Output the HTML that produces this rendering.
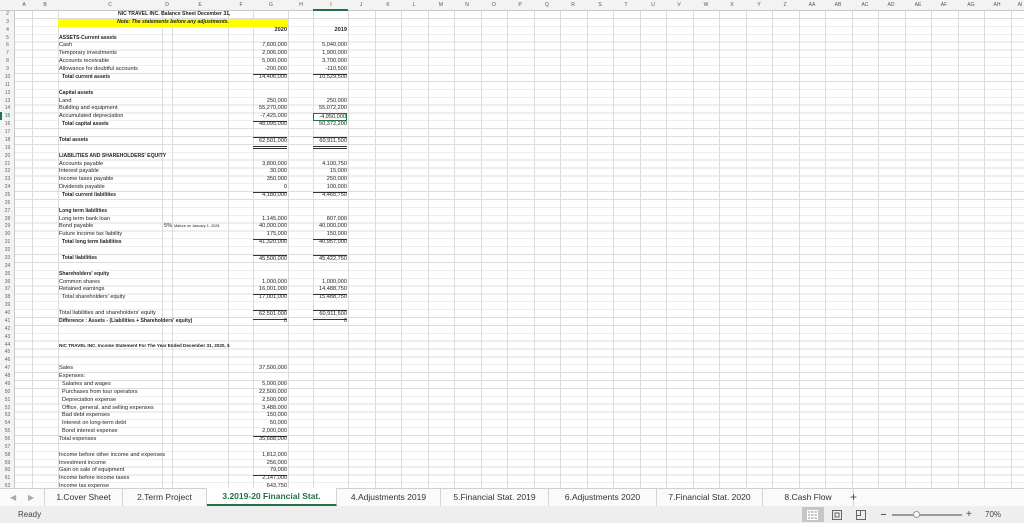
<!DOCTYPE html>
<html><head><meta charset="utf-8"><style>
*{margin:0;padding:0;box-sizing:border-box}
body{width:1024px;height:523px;overflow:hidden;background:#fff;font-family:"Liberation Sans",sans-serif;position:relative;color:#222}
.grid{position:absolute;left:0;top:11px;width:1024px;height:477px;background:repeating-linear-gradient(to bottom,transparent 0,transparent 7.07px,#dcdcdc 7.07px,#dcdcdc 7.87px)}
.v{position:absolute;top:0;height:488px;width:1px;background:#dcdcdc}
.hdr{position:absolute;left:0;top:0;width:1024px;height:11px;background:#f3f3f3;border-bottom:1px solid #c8c8c8}
.hl{position:absolute;top:2px;font-size:5px;color:#555;transform:translateX(-50%)}
.rn{position:absolute;left:0;width:15px;height:488px;background:#f3f3f3;border-right:1px solid #c8c8c8}
.r{position:absolute;left:0;width:1024px;height:7.87px;top:calc(11px + (var(--r) - 2)*7.87px);font-size:5.6px;line-height:7.87px;white-space:nowrap}
.n{position:absolute;left:2px;width:11px;text-align:center;color:#666;font-size:5px}
.c{position:absolute;left:59px}
.ci{position:absolute;left:62px}
.g{position:absolute;left:253px;width:34px;text-align:right}
.i{position:absolute;left:313px;width:34px;text-align:right}
b{font-weight:bold;font-size:5.1px}
b.g,b.i{font-size:5.6px}
.bt{border-top:1px solid #333}
.bb{border-bottom:1px solid #333}
.tabs{position:absolute;left:0;top:488px;width:1024px;height:18px;background:#fafafa;border-top:1px solid #d0d0d0;font-size:8.5px;color:#333}
.tab{position:absolute;top:0;height:17px;line-height:17px;text-align:center;border-right:1px solid #d5d5d5}
.status{position:absolute;left:0;top:506px;width:1024px;height:17px;background:#eeeeee;font-size:8px;color:#444}
</style></head><body>
<div class="grid"></div>
<div class="v" style="left:32px"></div><div class="v" style="left:58px"></div><div class="v" style="left:162px"></div><div class="v" style="left:172px"></div><div class="v" style="left:228px"></div><div class="v" style="left:253px"></div><div class="v" style="left:288px"></div><div class="v" style="left:313px"></div><div class="v" style="left:348px"></div><div class="v" style="left:375px"></div>
<div class="v" style="left:401px"></div><div class="v" style="left:428px"></div><div class="v" style="left:454px"></div><div class="v" style="left:481px"></div><div class="v" style="left:507px"></div><div class="v" style="left:534px"></div><div class="v" style="left:560px"></div><div class="v" style="left:587px"></div><div class="v" style="left:613px"></div><div class="v" style="left:640px"></div><div class="v" style="left:666px"></div><div class="v" style="left:693px"></div><div class="v" style="left:719px"></div><div class="v" style="left:746px"></div><div class="v" style="left:772px"></div><div class="v" style="left:799px"></div><div class="v" style="left:825px"></div><div class="v" style="left:852px"></div><div class="v" style="left:878px"></div><div class="v" style="left:905px"></div><div class="v" style="left:931px"></div><div class="v" style="left:958px"></div><div class="v" style="left:984px"></div><div class="v" style="left:1011px"></div>
<div class="hdr">
<span class="hl" style="left:24px">A</span><span class="hl" style="left:45px">B</span><span class="hl" style="left:110px">C</span><span class="hl" style="left:167px">D</span><span class="hl" style="left:200px">E</span><span class="hl" style="left:241px">F</span><span class="hl" style="left:271px">G</span><span class="hl" style="left:301px">H</span><span class="hl" style="left:331px">I</span><span class="hl" style="left:361px">J</span><span class="hl" style="left:388px">K</span><span class="hl" style="left:414px">L</span><span class="hl" style="left:441px">M</span><span class="hl" style="left:467px">N</span><span class="hl" style="left:494px">O</span><span class="hl" style="left:520px">P</span><span class="hl" style="left:547px">Q</span><span class="hl" style="left:573px">R</span><span class="hl" style="left:600px">S</span><span class="hl" style="left:626px">T</span><span class="hl" style="left:653px">U</span><span class="hl" style="left:679px">V</span><span class="hl" style="left:706px">W</span><span class="hl" style="left:732px">X</span><span class="hl" style="left:759px">Y</span><span class="hl" style="left:785px">Z</span><span class="hl" style="left:812px">AA</span><span class="hl" style="left:838px">AB</span><span class="hl" style="left:865px">AC</span><span class="hl" style="left:891px">AD</span><span class="hl" style="left:918px">AE</span><span class="hl" style="left:944px">AF</span><span class="hl" style="left:971px">AG</span><span class="hl" style="left:997px">AH</span><span class="hl" style="left:1020px">AI</span>
<div style="position:absolute;left:313px;top:9px;width:35px;height:2px;background:#217346"></div>
</div>
<div class="rn" style="top:11px"></div>
<div style="position:absolute;left:0;top:112px;width:2px;height:8px;background:#217346"></div>

<div class="r" style="--r:2"><span class="n">2</span><b style="position:absolute;left:118px">NIC TRAVEL INC. Balance Sheet December 31,</b></div>
<div class="r" style="--r:3"><span class="n">3</span><div style="position:absolute;left:58px;width:230px;height:7.87px;background:#ffff00;text-align:center"><b><i>Note: The statements before any adjustments.</i></b></div></div>
<div class="r" style="--r:4"><span class="n">4</span><b class="g">2020</b><b class="i">2019</b></div>
<div class="r" style="--r:5"><span class="n">5</span><b class="c">ASSETS-Current assets</b></div>
<div class="r" style="--r:6"><span class="n">6</span><span class="c">Cash</span><span class="g">7,600,000</span><span class="i">5,040,000</span></div>
<div class="r" style="--r:7"><span class="n">7</span><span class="c">Temporary investments</span><span class="g">2,006,000</span><span class="i">1,900,000</span></div>
<div class="r" style="--r:8"><span class="n">8</span><span class="c">Accounts receivable</span><span class="g">5,000,000</span><span class="i">3,700,000</span></div>
<div class="r" style="--r:9"><span class="n">9</span><span class="c">Allowance for doubtful accounts</span><span class="g bb">-200,000</span><span class="i bb">-110,500</span></div>
<div class="r" style="--r:10"><span class="n">10</span><b class="ci">Total current assets</b><span class="g">14,406,000</span><span class="i">10,529,500</span></div>
<div class="r" style="--r:11"><span class="n">11</span></div>
<div class="r" style="--r:12"><span class="n">12</span><b class="c">Capital assets</b></div>
<div class="r" style="--r:13"><span class="n">13</span><span class="c">Land</span><span class="g">250,000</span><span class="i">250,000</span></div>
<div class="r" style="--r:14"><span class="n">14</span><span class="c">Building and equipment</span><span class="g">55,270,000</span><span class="i">55,072,200</span></div>
<div class="r" style="--r:15"><span class="n" style="color:#217346">15</span><span class="c">Accumulated depreciation</span><span class="g bb">-7,425,000</span><span class="i" style="border:1.5px solid #217346;height:8px;top:-0.5px">-4,950,000</span></div>
<div class="r" style="--r:16"><span class="n">16</span><b class="ci">Total capital assets</b><span class="g">48,095,000</span><span class="i">50,372,200</span></div>
<div class="r" style="--r:17"><span class="n">17</span></div>
<div class="r" style="--r:18"><span class="n">18</span><b class="c">Total assets</b><span class="g" style="border-top:1.5px solid #333;border-bottom:3px double #333">62,501,000</span><span class="i" style="border-top:1.5px solid #333;border-bottom:3px double #333">60,911,500</span></div>
<div class="r" style="--r:19"><span class="n">19</span></div>
<div class="r" style="--r:20"><span class="n">20</span><b class="c">LIABILITIES AND SHAREHOLDERS' EQUITY</b></div>
<div class="r" style="--r:21"><span class="n">21</span><span class="c">Accounts payable</span><span class="g">3,800,000</span><span class="i">4,100,750</span></div>
<div class="r" style="--r:22"><span class="n">22</span><span class="c">Interest payable</span><span class="g">30,000</span><span class="i">15,000</span></div>
<div class="r" style="--r:23"><span class="n">23</span><span class="c">Income taxes payable</span><span class="g">350,000</span><span class="i">250,000</span></div>
<div class="r" style="--r:24"><span class="n">24</span><span class="c">Dividends payable</span><span class="g bb">0</span><span class="i bb">100,000</span></div>
<div class="r" style="--r:25"><span class="n">25</span><b class="ci">Total current liabilities</b><span class="g">4,180,000</span><span class="i">4,465,750</span></div>
<div class="r" style="--r:26"><span class="n">26</span></div>
<div class="r" style="--r:27"><span class="n">27</span><b class="c">Long term liabilities</b></div>
<div class="r" style="--r:28"><span class="n">28</span><span class="c">Long term bank loan</span><span class="g">1,145,000</span><span class="i">807,000</span></div>
<div class="r" style="--r:29"><span class="n">29</span><span class="c">Bond payable</span><span style="position:absolute;left:164px">5%</span><span style="position:absolute;left:174px;font-size:3.8px">Mature on January 1, 2028</span><span class="g">40,000,000</span><span class="i">40,000,000</span></div>
<div class="r" style="--r:30"><span class="n">30</span><span class="c">Future income tax liability</span><span class="g bb">175,000</span><span class="i bb">150,000</span></div>
<div class="r" style="--r:31"><span class="n">31</span><b class="ci">Total long term liabilities</b><span class="g">41,320,000</span><span class="i">40,957,000</span></div>
<div class="r" style="--r:32"><span class="n">32</span></div>
<div class="r" style="--r:33"><span class="n">33</span><b class="ci">Total liabilities</b><span class="g bt">45,500,000</span><span class="i bt">45,422,750</span></div>
<div class="r" style="--r:34"><span class="n">34</span></div>
<div class="r" style="--r:35"><span class="n">35</span><b class="c">Shareholders' equity</b></div>
<div class="r" style="--r:36"><span class="n">36</span><span class="c">Common shares</span><span class="g">1,000,000</span><span class="i">1,000,000</span></div>
<div class="r" style="--r:37"><span class="n">37</span><span class="c">Retained earnings</span><span class="g bb">16,001,000</span><span class="i bb">14,488,750</span></div>
<div class="r" style="--r:38"><span class="n">38</span><span class="ci">Total shareholders' equity</span><span class="g">17,001,000</span><span class="i">15,488,750</span></div>
<div class="r" style="--r:39"><span class="n">39</span></div>
<div class="r" style="--r:40"><span class="n">40</span><span class="c">Total liabilities and shareholders' equity</span><span class="g bt bb">62,501,000</span><span class="i bt bb">60,911,500</span></div>
<div class="r" style="--r:41"><span class="n">41</span><b class="c">Difference : Assets - (Liabilities + Shareholders' equity)</b><span class="g">0</span><span class="i">0</span></div>
<div class="r" style="--r:42"><span class="n">42</span></div>
<div class="r" style="--r:43"><span class="n">43</span></div>
<div class="r" style="--r:44"><span class="n">44</span><b class="c" style="font-size:4.6px">NIC TRAVEL INC. Income Statement For The Year Ended December 31, 2020, $</b></div>
<div class="r" style="--r:45"><span class="n">45</span></div>
<div class="r" style="--r:46"><span class="n">46</span></div>
<div class="r" style="--r:47"><span class="n">47</span><span class="c">Sales</span><span class="g">37,500,000</span></div>
<div class="r" style="--r:48"><span class="n">48</span><span class="c">Expenses:</span></div>
<div class="r" style="--r:49"><span class="n">49</span><span class="ci">Salaries and wages</span><span class="g">5,000,000</span></div>
<div class="r" style="--r:50"><span class="n">50</span><span class="ci">Purchases from tour operators</span><span class="g">22,500,000</span></div>
<div class="r" style="--r:51"><span class="n">51</span><span class="ci">Depreciation expense</span><span class="g">2,500,000</span></div>
<div class="r" style="--r:52"><span class="n">52</span><span class="ci">Office, general, and selling expenses</span><span class="g">3,488,000</span></div>
<div class="r" style="--r:53"><span class="n">53</span><span class="ci">Bad debt expenses</span><span class="g">150,000</span></div>
<div class="r" style="--r:54"><span class="n">54</span><span class="ci">Interest on long-term debt</span><span class="g">50,000</span></div>
<div class="r" style="--r:55"><span class="n">55</span><span class="ci">Bond interest expense</span><span class="g bb">2,000,000</span></div>
<div class="r" style="--r:56"><span class="n">56</span><span class="c">Total expenses</span><span class="g">35,688,000</span></div>
<div class="r" style="--r:57"><span class="n">57</span></div>
<div class="r" style="--r:58"><span class="n">58</span><span class="c">Income before other income and expenses</span><span class="g">1,812,000</span></div>
<div class="r" style="--r:59"><span class="n">59</span><span class="c">Investment income</span><span class="g">256,000</span></div>
<div class="r" style="--r:60"><span class="n">60</span><span class="c">Gain on sale of equipment</span><span class="g bb">79,000</span></div>
<div class="r" style="--r:61"><span class="n">61</span><span class="c">Income before income taxes</span><span class="g">2,147,000</span></div>
<div class="r" style="--r:62"><span class="n">62</span><span class="c">Income tax expense</span><span class="g">643,750</span></div>

<div class="tabs">
<span style="position:absolute;left:10px;top:0;line-height:17px;color:#aaa;font-size:8px">&#9664;</span>
<span style="position:absolute;left:28px;top:0;line-height:17px;color:#aaa;font-size:8px">&#9654;</span>
<div class="tab" style="left:44px;width:79px;border-left:1px solid #d5d5d5">1.Cover Sheet</div>
<div class="tab" style="left:123px;width:84px">2.Term Project</div>
<div class="tab" style="left:207px;width:130px;background:#fff;color:#217346;font-weight:bold;top:-1px;height:18px;border-bottom:2px solid #217346">3.2019-20 Financial Stat.</div>
<div class="tab" style="left:337px;width:104px">4.Adjustments 2019</div>
<div class="tab" style="left:441px;width:108px">5.Financial Stat. 2019</div>
<div class="tab" style="left:549px;width:108px">6.Adjustments 2020</div>
<div class="tab" style="left:657px;width:106px">7.Financial Stat. 2020</div>
<div class="tab" style="left:763px;width:91px">8.Cash Flow</div>
<span style="position:absolute;left:850px;top:0;line-height:17px;font-size:12px;color:#444">+</span>
</div>
<div class="status">
<span style="position:absolute;left:18px;top:0;line-height:17px">Ready</span>
<div style="position:absolute;left:802px;top:1px;width:22px;height:15px;background:#c6c6c6"></div>
<svg style="position:absolute;left:807px;top:4px" width="11" height="10"><path d="M0.5 0.5h10v9h-10zM0.5 3.5h10M0.5 6.5h10M3.5 0.5v9M7 0.5v9" stroke="#fff" fill="none"/></svg>
<svg style="position:absolute;left:832px;top:4px" width="10" height="10"><path d="M0.5 0.5h9v9h-9zM3 3h4v4h-4z" stroke="#666" fill="none"/></svg>
<svg style="position:absolute;left:856px;top:4px" width="10" height="10"><path d="M0.5 0.5h9v9h-9zM0.5 5.5h4v-5" stroke="#666" fill="none"/></svg>
<div style="position:absolute;left:881px;top:8px;width:5px;height:1px;background:#555"></div>
<div style="position:absolute;left:892px;top:8px;width:70px;height:1.5px;background:#999"></div>
<div style="position:absolute;left:913px;top:5px;width:7px;height:7px;border-radius:50%;background:#fff;border:1px solid #999"></div>
<span style="position:absolute;left:966px;top:0;line-height:17px;font-size:10px">+</span>
<span style="position:absolute;left:985px;top:0;line-height:17px">70%</span>
</div>
</body></html>
